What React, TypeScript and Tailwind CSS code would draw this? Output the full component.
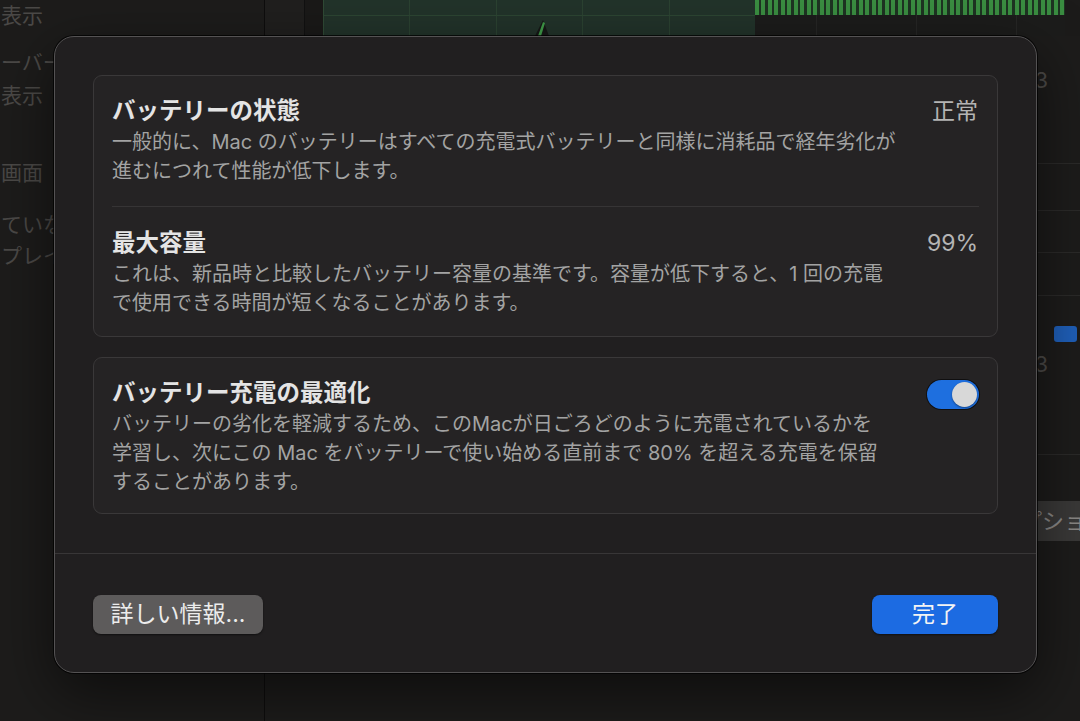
import React from "react";

function Toggle() {
  return (
    <div className="w-[52px] h-[29px] rounded-full bg-[#1e6fdf] p-[2px] flex justify-end shadow-[0_0_0_1px_rgba(0,0,0,0.55)]">
      <div className="w-[25px] h-[25px] rounded-full bg-[#d8d8d8] shadow-[0_1px_2px_rgba(0,0,0,0.4)]" />
    </div>
  );
}

export default function App() {
  return (
    <div className="relative w-[1080px] h-[721px] overflow-hidden bg-[#1b1a19] font-['Inter','Noto_Sans_CJK_JP',sans-serif]">
      {/* background application */}
      <div className="flex h-full">
        <aside className="w-[265px] shrink-0 h-full bg-[#1d1c1b] border-r border-[#0e0d0d] text-[21px] leading-[24px] text-[#4b4947] overflow-hidden">
          <div className="whitespace-nowrap pl-[1px] mt-[4px]">表示</div>
          <div className="whitespace-nowrap pl-[1px] mt-[23px]">ーバー</div>
          <div className="whitespace-nowrap pl-[1px] mt-[9px]">表示</div>
          <div className="whitespace-nowrap pl-[1px] mt-[53px]">画面</div>
          <div className="whitespace-nowrap pl-[1px] mt-[28px]">ていな</div>
          <div className="whitespace-nowrap pl-[1px] mt-[7px]">プレイ</div>
        </aside>
        <main className="flex-1 flex flex-col">
          {/* top strip */}
          <div className="h-[36px] flex shrink-0">
            <div className="w-[40px] bg-[#201f1e] border-r border-[#111]" />
            <div className="w-[18px] bg-[#1a1918]" />
            <div className="relative w-[432px] bg-[#22332a] border-l border-[#2f4a35] flex">
              <div className="flex-1 border-r border-[#2b4231]" />
              <div className="flex-1 border-r border-[#2b4231]" />
              <div className="flex-1 border-r border-[#2b4231]" />
              <div className="flex-1 border-r border-[#2b4231]" />
              <div className="flex-1" />
              <div className="absolute left-0 right-0 top-[15px] h-px bg-[#2c4633]" />
              <svg className="absolute left-[210px] top-[18px]" width="16" height="18" viewBox="0 0 16 18">
                <path d="M1 18 L9 2 L15 18 Z" fill="#161716" />
                <path d="M4 18 L9 4 L11 5 L7 18 Z" fill="#3f9a48" />
              </svg>
            </div>
            <div className="w-[310px] flex flex-col">
              <div className="h-[15px] bg-[repeating-linear-gradient(90deg,#3a8d41_0px,#3a8d41_4px,#1e3322_4px,#1e3322_6.5px)]" />
              <div className="flex-1 bg-[#1c1c1b] flex">
                <div className="w-[62px] border-r border-[#262625]" />
                <div className="w-[100px] border-r border-[#262625]" />
                <div className="w-[100px] border-r border-[#262625]" />
              </div>
            </div>
            <div className="flex-1 bg-[#1c1b1a]" />
          </div>
          {/* right-hand panel rows */}
          <div className="flex-1 flex flex-col bg-[#1d1c1b] text-[#4d4b49]">
            <div className="h-[128px] flex items-start justify-end pr-[32px] pt-[30px] text-[22px] leading-[28px] border-b border-[#2b2a29]">3</div>
            <div className="h-[47px] border-b border-[#2b2a29]" />
            <div className="h-[42px] border-b border-[#2b2a29]" />
            <div className="h-[43px] border-b border-[#2b2a29]" />
            <div className="h-[159px] flex flex-col items-end pr-[3px] border-b border-[#2b2a29]">
              <div className="mt-[30px] w-[23px] h-[16px] rounded-[3px] bg-[#1f5fb8]" />
              <div className="mt-[8px] mr-[29px] text-[22px] leading-[28px]">3</div>
            </div>
            <div className="flex justify-end pt-[46px]">
              <div className="w-[70px] h-[40px] bg-[#3a3938] text-[22px] leading-[40px] text-[#8a8886] pl-[10px] whitespace-nowrap overflow-hidden">プション</div>
            </div>
          </div>
        </main>
      </div>

      {/* dialog */}
      <div className="absolute left-[54px] top-[36px] w-[983px] h-[637px] rounded-[20px] bg-[#211f20] border border-[#545253] shadow-[0_0_0_1px_rgba(0,0,0,0.75),0_20px_60px_rgba(0,0,0,0.55)] flex flex-col">
        <div className="px-[38px] pt-[38px] flex flex-col gap-[20px]">
          {/* card 1 */}
          <div className="rounded-[9px] bg-[#252324] border border-[#3a3839]">
            <div className="px-[18px] pt-[20px] pb-[20px] flex items-start">
              <div className="flex-1">
                <div className="text-[23.5px] leading-[30px] font-semibold text-[#e4e4e4]">バッテリーの状態</div>
                <div className="mt-[2px] text-[20px] leading-[29px] text-[#a3a3a3]">
                  <div>一般的に、Mac のバッテリーはすべての充電式バッテリーと同様に消耗品で経年劣化が</div>
                  <div>進むにつれて性能が低下します。</div>
                </div>
              </div>
              <div className="text-[23px] leading-[30px] text-[#b4b4b4] pr-[1px]">正常</div>
            </div>
            <div className="mx-[18px] h-px bg-[#363435]" />
            <div className="px-[18px] pt-[21px] pb-[18px] flex items-start">
              <div className="flex-1">
                <div className="text-[23.5px] leading-[30px] font-semibold text-[#e4e4e4]">最大容量</div>
                <div className="mt-[2px] text-[20px] leading-[29px] text-[#a3a3a3]">
                  <div>これは、新品時と比較したバッテリー容量の基準です。容量が低下すると、1 回の充電</div>
                  <div>で使用できる時間が短くなることがあります。</div>
                </div>
              </div>
              <div className="text-[23px] leading-[30px] text-[#b4b4b4] pr-[1px]">99%</div>
            </div>
          </div>
          {/* card 2 */}
          <div className="rounded-[9px] bg-[#252324] border border-[#3a3839] px-[18px] pt-[20px] pb-[16px] flex items-start">
            <div className="flex-1">
              <div className="text-[23.5px] leading-[30px] font-semibold text-[#e4e4e4]">バッテリー充電の最適化</div>
              <div className="mt-[2px] text-[20px] leading-[29px] text-[#a3a3a3]">
                <div>バッテリーの劣化を軽減するため、このMacが日ごろどのように充電されているかを</div>
                <div>学習し、次にこの Mac をバッテリーで使い始める直前まで 80% を超える充電を保留</div>
                <div>することがあります。</div>
              </div>
            </div>
            <div className="mt-[2px]">
              <Toggle />
            </div>
          </div>
        </div>
        <div className="mt-[39px] h-px bg-[#383637]" />
        <div className="px-[38px] pt-[41px] flex justify-between">
          <button className="w-[170px] h-[39px] rounded-[8px] bg-[#5d5b5b] text-[23px] leading-[39px] text-[#ececec] shadow-[0_1px_2px_rgba(0,0,0,0.5)] text-center">
            詳しい情報...
          </button>
          <button className="w-[126px] h-[39px] rounded-[8px] bg-[#1c6be2] text-[23px] leading-[39px] text-[#f4f4f4] shadow-[0_1px_2px_rgba(0,0,0,0.5)] text-center">
            完了
          </button>
        </div>
      </div>
    </div>
  );
}
